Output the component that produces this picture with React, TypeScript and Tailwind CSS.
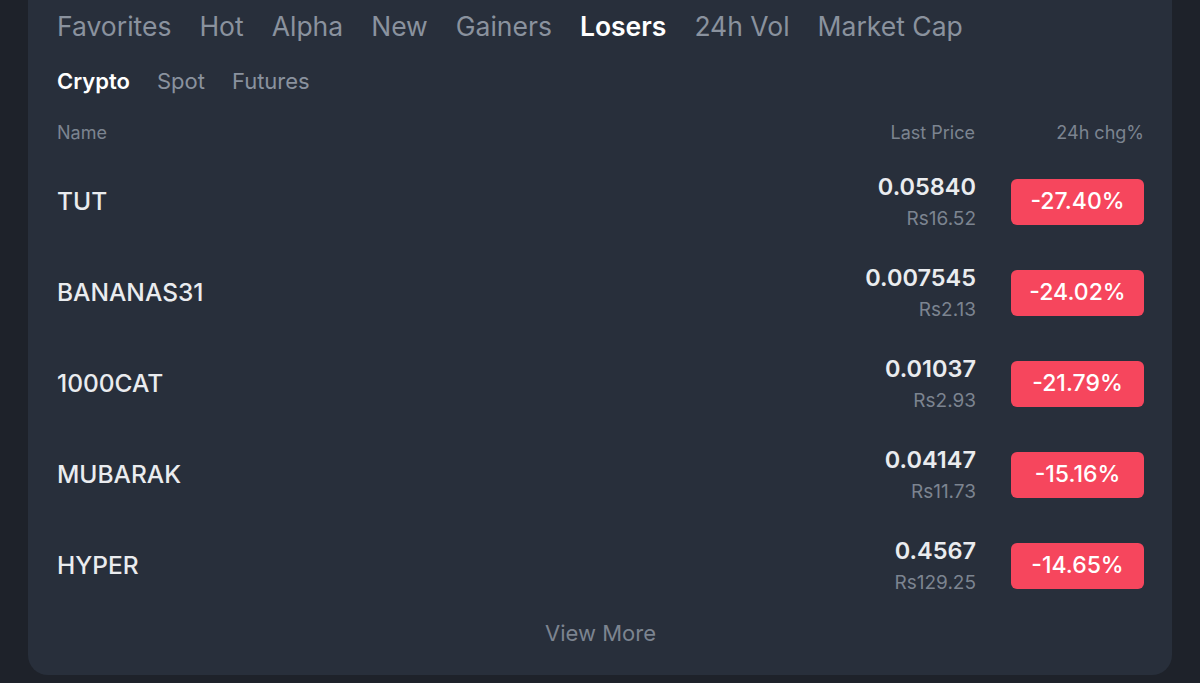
import React from "react";

const tabs = ["Favorites", "Hot", "Alpha", "New", "Gainers", "Losers", "24h Vol", "Market Cap"];
const sub = ["Crypto", "Spot", "Futures"];
const rows = [
  { name: "TUT", price: "0.05840", fiat: "Rs16.52", chg: "-27.40%" },
  { name: "BANANAS31", price: "0.007545", fiat: "Rs2.13", chg: "-24.02%" },
  { name: "1000CAT", price: "0.01037", fiat: "Rs2.93", chg: "-21.79%" },
  { name: "MUBARAK", price: "0.04147", fiat: "Rs11.73", chg: "-15.16%" },
  { name: "HYPER", price: "0.4567", fiat: "Rs129.25", chg: "-14.65%" },
];

export default function App() {
  return (
    <div
      className="w-[1200px] h-[683px] overflow-hidden bg-[#1e222a] px-[28px]"
      style={{ fontFamily: "Inter, 'Noto Sans', sans-serif" }}
    >
      <div className="h-[675px] rounded-b-[20px] bg-[#282f3b] pl-[29px] pr-[28px] flex flex-col">
        <div className="flex gap-[28px] pt-[3px] h-[50px] items-center text-[26.5px] text-[#8a929e]">
          {tabs.map((t) => (
            <span key={t} className={t === "Losers" ? "text-white font-semibold" : ""}>
              {t}
            </span>
          ))}
        </div>
        <div className="flex gap-[27px] mt-[7px] h-[48px] items-center text-[22px] text-[#8a929e]">
          {sub.map((t) => (
            <span key={t} className={t === "Crypto" ? "text-white font-semibold" : ""}>
              {t}
            </span>
          ))}
        </div>
        <div className="flex items-center h-[44px] text-[18px] text-[#7c8490] mt-[5px]">
          <span className="flex-1">Name</span>
          <span className="w-[200px] text-right">Last Price</span>
          <span className="w-[169px] text-right">24h chg%</span>
        </div>
        <div className="flex flex-col mt-[2px]">
          {rows.map((r) => (
            <div key={r.name} className="flex items-center h-[91px]">
              <span className="flex-1 text-[24.5px] text-[#eaecef] font-medium">{r.name}</span>
              <div className="flex flex-col items-end leading-none">
                <span className="text-[23.5px] text-[#eaecef] font-semibold">{r.price}</span>
                <span className="text-[19px] text-[#7c8490] mt-[11px]">{r.fiat}</span>
              </div>
              <div className="ml-[35px] w-[133px] h-[46px] rounded-[6px] bg-[#f6465d] flex items-center justify-center text-white text-[23px] font-medium">
                {r.chg}
              </div>
            </div>
          ))}
        </div>
        <div className="flex justify-center mt-[6px] text-[22px] text-[#7c8490]">View More</div>
      </div>
    </div>
  );
}
